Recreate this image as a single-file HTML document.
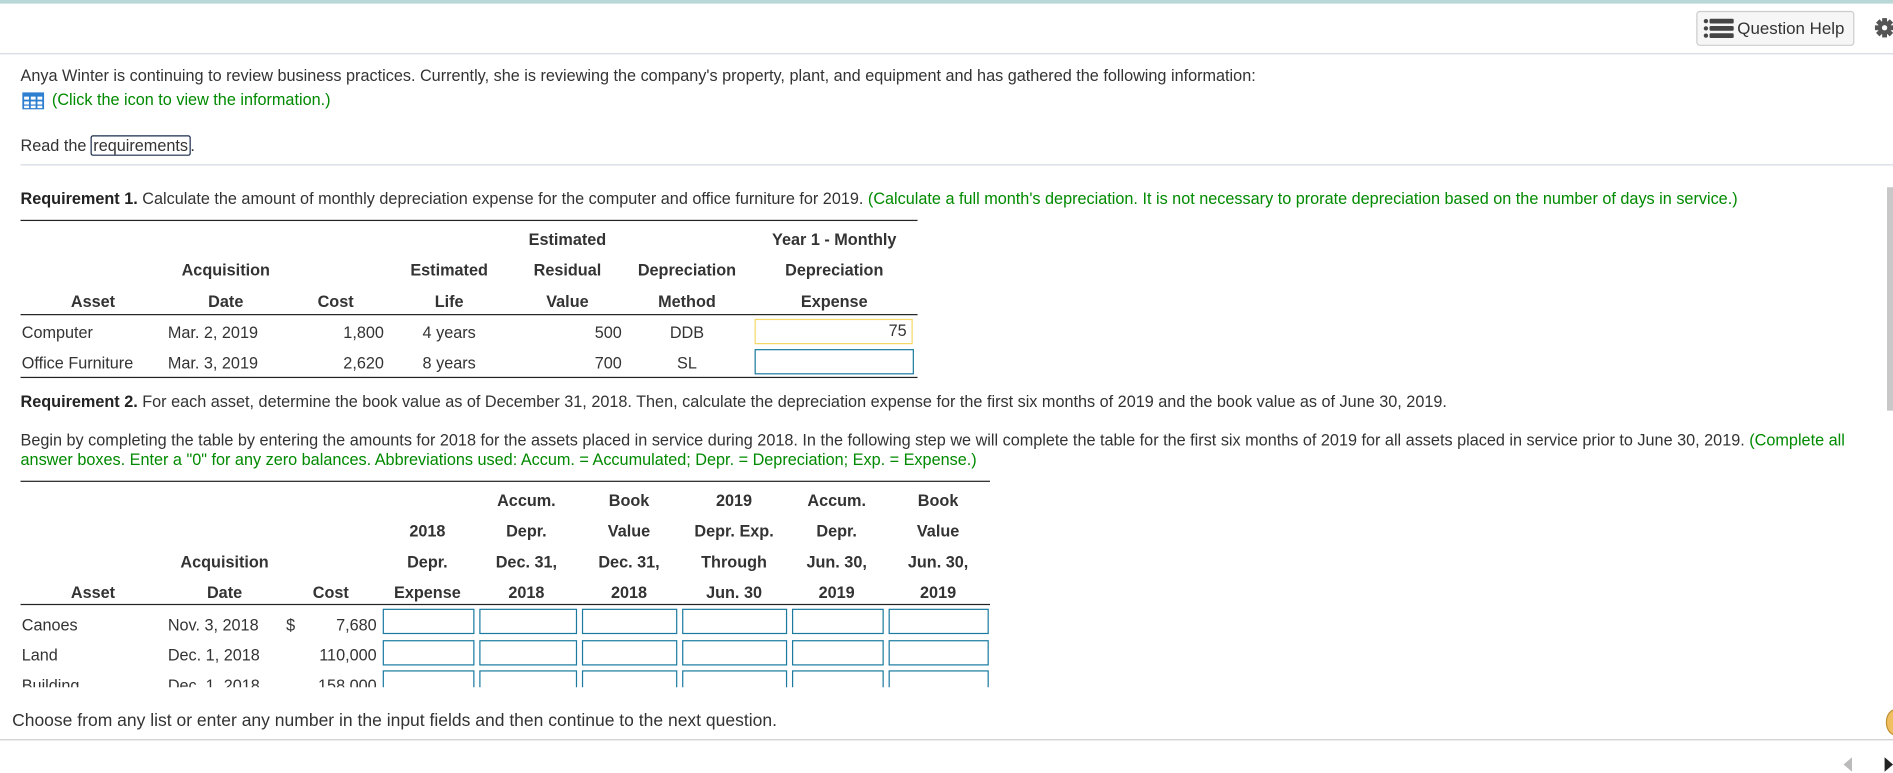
<!DOCTYPE html><html><head><style>
html,body{margin:0;padding:0;width:1893px;height:773px;overflow:hidden;background:#fff}
#w{position:absolute;left:0;top:0;width:1568px;height:640px;transform:scale(1.2073,1.2078);transform-origin:0 0;font-family:"Liberation Sans",sans-serif;font-size:13.45px;color:#333}
.a{position:absolute;white-space:nowrap}
.b{font-weight:bold}
.g{color:#008a00}
.c{transform:translateX(-50%)}
.r{transform:translateX(-100%)}
.ln{position:absolute;height:1px;background:#222}
.in{position:absolute;border:1px solid #1a7aa0;box-sizing:border-box;background:#fff}
</style></head><body><div id="w">
<div class="a" style="left:0;top:0;width:1568px;height:3px;background:#b9d7d6"></div>
<div class="a" style="left:1405px;top:9px;width:131px;height:29px;border:1px solid #ccc;border-radius:3px;background:#f6f6f6;box-sizing:border-box"></div>
<svg class="a" style="left:1411px;top:15px" width="26" height="17" viewBox="0 0 26 17"><g fill="#444"><circle cx="2" cy="2.5" r="1.8"/><circle cx="2" cy="8.5" r="1.8"/><circle cx="2" cy="14.5" r="1.8"/><rect x="5" y="0.5" width="20" height="4" rx="1"/><rect x="5" y="6.5" width="20" height="4" rx="1"/><rect x="5" y="12.5" width="20" height="4" rx="1"/></g></svg>
<div class="a" style="left:1439px;top:15px;font-size:14px;color:#333">Question Help</div>
<svg class="a" style="left:1552px;top:14px" width="16" height="18" viewBox="0 0 16 18"><g fill="#555"><rect x="7" y="1" width="4" height="16"/><rect x="1" y="7" width="16" height="4"/><rect x="7" y="1" width="4" height="16" transform="rotate(45 9 9)"/><rect x="7" y="1" width="4" height="16" transform="rotate(-45 9 9)"/><circle cx="9" cy="9" r="5.5"/></g><circle cx="9" cy="9" r="2.2" fill="#fff"/></svg>
<div class="a" style="left:0;top:44px;width:1568px;height:1px;background:#d3d9e2"></div>
<div class="a" style="left:17px;top:55px">Anya Winter is continuing to review business practices. Currently, she is reviewing the company's property, plant, and equipment and has gathered the following information:</div>
<svg class="a" style="left:18px;top:76px" width="19" height="15" viewBox="0 0 19 15"><rect x="0.5" y="0.5" width="18" height="14" fill="#2f7fd0"/><g fill="#fff"><rect x="2" y="4" width="4" height="2.5"/><rect x="7.5" y="4" width="4" height="2.5"/><rect x="13" y="4" width="4" height="2.5"/><rect x="2" y="8" width="4" height="2.5"/><rect x="7.5" y="8" width="4" height="2.5"/><rect x="13" y="8" width="4" height="2.5"/><rect x="2" y="11.5" width="4" height="2"/><rect x="7.5" y="11.5" width="4" height="2"/><rect x="13" y="11.5" width="4" height="2"/></g></svg>
<div class="a g" style="left:43px;top:75px">(Click the icon to view the information.)</div>
<div class="a" style="left:17px;top:113px">Read the <span style="border:1px solid #1a2b4a;border-radius:2px;padding:0 1px">requirements</span>.</div>
<div class="a" style="left:17px;top:136px;width:1551px;height:1px;background:#d3d9e2"></div>
<div class="a" style="left:1563px;top:155px;width:5px;height:185px;background:#c8c8c8"></div>
<div class="a" style="left:17px;top:157px"><span class="b" style="color:#222">Requirement 1.</span> Calculate the amount of monthly depreciation expense for the computer and office furniture for 2019. <span class="g">(Calculate a full month's depreciation. It is not necessary to prorate depreciation based on the number of days in service.)</span></div>
<div class="ln" style="left:17px;top:182px;width:743px"></div>
<div class="a b c" style="left:470px;top:191px">Estimated</div><div class="a b c" style="left:691px;top:191px">Year 1 - Monthly</div>
<div class="a b c" style="left:187px;top:216px">Acquisition</div><div class="a b c" style="left:372px;top:216px">Estimated</div><div class="a b c" style="left:470px;top:216px">Residual</div><div class="a b c" style="left:569px;top:216px">Depreciation</div><div class="a b c" style="left:691px;top:216px">Depreciation</div>
<div class="a b c" style="left:77px;top:242px">Asset</div><div class="a b c" style="left:187px;top:242px">Date</div><div class="a b c" style="left:278px;top:242px">Cost</div><div class="a b c" style="left:372px;top:242px">Life</div><div class="a b c" style="left:470px;top:242px">Value</div><div class="a b c" style="left:569px;top:242px">Method</div><div class="a b c" style="left:691px;top:242px">Expense</div>
<div class="ln" style="left:17px;top:260px;width:743px"></div>
<div class="a" style="left:18px;top:268px">Computer</div><div class="a" style="left:139px;top:268px">Mar. 2, 2019</div><div class="a r" style="left:318px;top:268px">1,800</div><div class="a" style="left:350px;top:268px">4 years</div><div class="a r" style="left:515px;top:268px">500</div><div class="a c" style="left:569px;top:268px">DDB</div>
<div class="in" style="left:625px;top:264px;width:131px;height:21px;border-color:#f5d866;text-align:right;padding:1px 4px 0 0">75</div>
<div class="a" style="left:18px;top:293px">Office Furniture</div><div class="a" style="left:139px;top:293px">Mar. 3, 2019</div><div class="a r" style="left:318px;top:293px">2,620</div><div class="a" style="left:350px;top:293px">8 years</div><div class="a r" style="left:515px;top:293px">700</div><div class="a c" style="left:569px;top:293px">SL</div>
<div class="in" style="left:625px;top:289px;width:132px;height:21px"></div>
<div class="ln" style="left:17px;top:312px;width:743px"></div>
<div class="a" style="left:17px;top:325px"><span class="b" style="color:#222">Requirement 2.</span> For each asset, determine the book value as of December 31, 2018. Then, calculate the depreciation expense for the first six months of 2019 and the book value as of June 30, 2019.</div>
<div class="a" style="left:17px;top:357px;white-space:normal;width:1535px;line-height:16px">Begin by completing the table by entering the amounts for 2018 for the assets placed in service during 2018. In the following step we will complete the table for the first six months of 2019 for all assets placed in service prior to June 30, 2019. <span class="g">(Complete all answer boxes. Enter a "0" for any zero balances. Abbreviations used: Accum. = Accumulated; Depr. = Depreciation; Exp. = Expense.)</span></div>
<div class="ln" style="left:17px;top:398px;width:803px"></div>
<div class="a b c" style="left:436px;top:407px">Accum.</div><div class="a b c" style="left:521px;top:407px">Book</div><div class="a b c" style="left:608px;top:407px">2019</div><div class="a b c" style="left:693px;top:407px">Accum.</div><div class="a b c" style="left:777px;top:407px">Book</div>
<div class="a b c" style="left:354px;top:432px">2018</div><div class="a b c" style="left:436px;top:432px">Depr.</div><div class="a b c" style="left:521px;top:432px">Value</div><div class="a b c" style="left:608px;top:432px">Depr. Exp.</div><div class="a b c" style="left:693px;top:432px">Depr.</div><div class="a b c" style="left:777px;top:432px">Value</div>
<div class="a b c" style="left:186px;top:458px">Acquisition</div><div class="a b c" style="left:354px;top:458px">Depr.</div><div class="a b c" style="left:436px;top:458px">Dec. 31,</div><div class="a b c" style="left:521px;top:458px">Dec. 31,</div><div class="a b c" style="left:608px;top:458px">Through</div><div class="a b c" style="left:693px;top:458px">Jun. 30,</div><div class="a b c" style="left:777px;top:458px">Jun. 30,</div>
<div class="a b c" style="left:77px;top:483px">Asset</div><div class="a b c" style="left:186px;top:483px">Date</div><div class="a b c" style="left:274px;top:483px">Cost</div><div class="a b c" style="left:354px;top:483px">Expense</div><div class="a b c" style="left:436px;top:483px">2018</div><div class="a b c" style="left:521px;top:483px">2018</div><div class="a b c" style="left:608px;top:483px">Jun. 30</div><div class="a b c" style="left:693px;top:483px">2019</div><div class="a b c" style="left:777px;top:483px">2019</div>
<div class="ln" style="left:17px;top:500px;width:803px"></div>
<div style="position:absolute;left:0;top:501px;width:830px;height:68px;overflow:hidden">
<div class="a" style="left:18px;top:9px">Canoes</div><div class="a" style="left:139px;top:9px">Nov. 3, 2018</div><div class="a" style="left:237px;top:9px">$</div><div class="a r" style="left:312px;top:9px">7,680</div>
<div class="a" style="left:18px;top:34px">Land</div><div class="a" style="left:139px;top:34px">Dec. 1, 2018</div><div class="a r" style="left:312px;top:34px">110,000</div>
<div class="a" style="left:18px;top:59px">Building</div><div class="a" style="left:139px;top:59px">Dec. 1, 2018</div><div class="a r" style="left:312px;top:59px">158,000</div>
<div class="in" style="left:317px;top:3px;width:76px;height:21px"></div><div class="in" style="left:397px;top:3px;width:81px;height:21px"></div><div class="in" style="left:482px;top:3px;width:79px;height:21px"></div><div class="in" style="left:565px;top:3px;width:87px;height:21px"></div><div class="in" style="left:656px;top:3px;width:76px;height:21px"></div><div class="in" style="left:736px;top:3px;width:83px;height:21px"></div>
<div class="in" style="left:317px;top:29px;width:76px;height:21px"></div><div class="in" style="left:397px;top:29px;width:81px;height:21px"></div><div class="in" style="left:482px;top:29px;width:79px;height:21px"></div><div class="in" style="left:565px;top:29px;width:87px;height:21px"></div><div class="in" style="left:656px;top:29px;width:76px;height:21px"></div><div class="in" style="left:736px;top:29px;width:83px;height:21px"></div>
<div class="in" style="left:317px;top:54px;width:76px;height:21px"></div><div class="in" style="left:397px;top:54px;width:81px;height:21px"></div><div class="in" style="left:482px;top:54px;width:79px;height:21px"></div><div class="in" style="left:565px;top:54px;width:87px;height:21px"></div><div class="in" style="left:656px;top:54px;width:76px;height:21px"></div><div class="in" style="left:736px;top:54px;width:83px;height:21px"></div>
</div>
<div class="a" style="left:10px;top:589px;font-size:14.5px;color:#333">Choose from any list or enter any number in the input fields and then continue to the next question.</div>
<div class="a" style="left:1562px;top:587px;width:14px;height:20px;border-radius:50%;background:#f0c060;border:1px solid #c09030"></div>
<div class="a" style="left:0;top:612px;width:1568px;height:1px;background:#ccc"></div>
<div class="a" style="left:1527px;top:627px;width:0;height:0;border-top:6px solid transparent;border-bottom:6px solid transparent;border-right:7px solid #bbb"></div>
<div class="a" style="left:1561px;top:627px;width:0;height:0;border-top:6px solid transparent;border-bottom:6px solid transparent;border-left:7px solid #222"></div>
</div></body></html>
